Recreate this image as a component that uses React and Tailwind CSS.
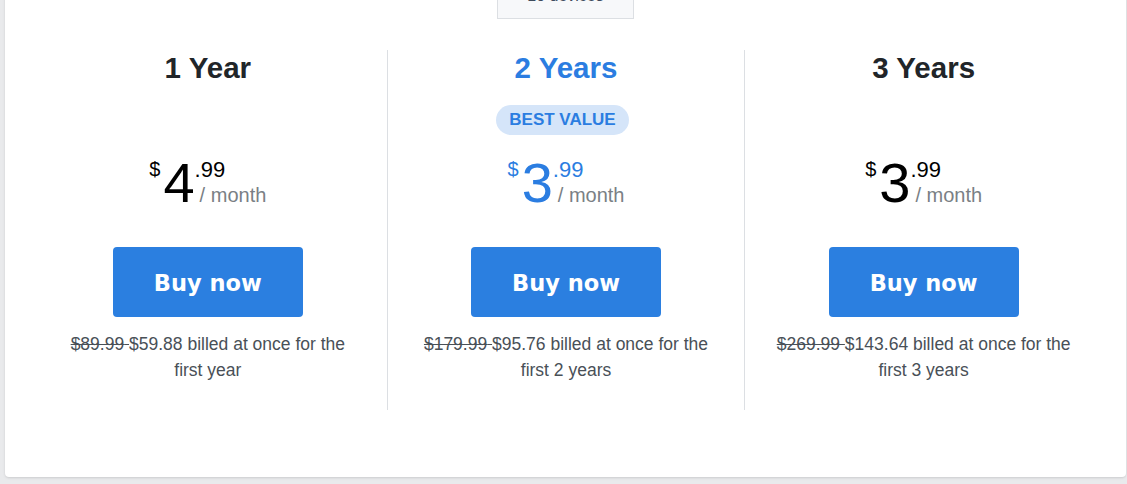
import React from 'react';

const plans = [
  { title: '1 Year', whole: '4', cents: '.99', old: '$89.99', total: '$59.88', term: 'first year' },
  { title: '2 Years', whole: '3', cents: '.99', old: '$179.99', total: '$95.76', term: 'first 2 years', best: true },
  { title: '3 Years', whole: '3', cents: '.99', old: '$269.99', total: '$143.64', term: 'first 3 years' },
];

const PlanColumn = ({ plan, first }) => {
  const accent = plan.best ? 'text-[#2b7de1]' : 'text-black';

  return (
    <div className={`flex flex-col items-center px-[28px] pb-[27px] ${first ? '' : 'border-l border-[#dcdfe3]'}`}>
      <h2
        className={`text-[29.5px] leading-[36px] font-bold ${plan.best ? 'text-[#2b7de1]' : 'text-[#212529]'}`}
      >
        {plan.title}
      </h2>

      <div className="mt-[19px] h-[30px]">
        {plan.best && (
          <span className="-ml-[7px] flex h-[30px] items-center rounded-full bg-[#d5e5f9] px-[13px] text-[17px] font-bold text-[#2b7de1]">
            BEST VALUE
          </span>
        )}
      </div>

      <div className={`mt-[20px] flex items-start ${accent}`}>
        <span className="mt-[4px] mr-[3px] text-[20px] leading-none">$</span>
        <span className="text-[56px] leading-none">{plan.whole}</span>
        <div className="mt-[4px] flex flex-col">
          <span className="text-[22px] leading-[22px]">{plan.cents}</span>
          <span className="mt-[4px] ml-[5px] text-[20px] leading-[20px] text-[#7a7f85]">/ month</span>
        </div>
      </div>

      <button
        className="mt-[36px] h-[70px] w-[190px] rounded-[4px] bg-[#2b7fe0] pt-[4px] text-[22.5px] font-bold text-white"
        style={{ fontFamily: '"DejaVu Sans", Verdana, sans-serif' }}
      >
        Buy now
      </button>

      <p className="mt-[14px] text-center text-[17.5px] leading-[26px] text-[#495057]">
        <span className="line-through">{plan.old} </span>
        {plan.total} billed at once for the {plan.term}
      </p>
    </div>
  );
};

const App = () => {
  return (
    <div
      className="h-[484px] overflow-hidden bg-[#e9eaec] pl-[5px] pr-[1px]"
      style={{ fontFamily: '"Liberation Sans", Arial, sans-serif' }}
    >
      <div className="-mt-[40px] rounded-b-[4px] bg-white pb-[67px] shadow-sm">
        <div className="mx-auto flex h-[59px] w-[137px] items-end justify-center border border-[#dcdfe3] bg-[#f7f8fa] pb-[10px]">
          <span className="text-[16px] leading-[24px] text-[#3d4a5c]">10 devices</span>
        </div>

        <div className="mt-[31px] grid grid-cols-3 px-[24px]">
          {plans.map((plan, i) => (
            <PlanColumn key={plan.title} plan={plan} first={i === 0} />
          ))}
        </div>
      </div>
    </div>
  );
};

export default App;
